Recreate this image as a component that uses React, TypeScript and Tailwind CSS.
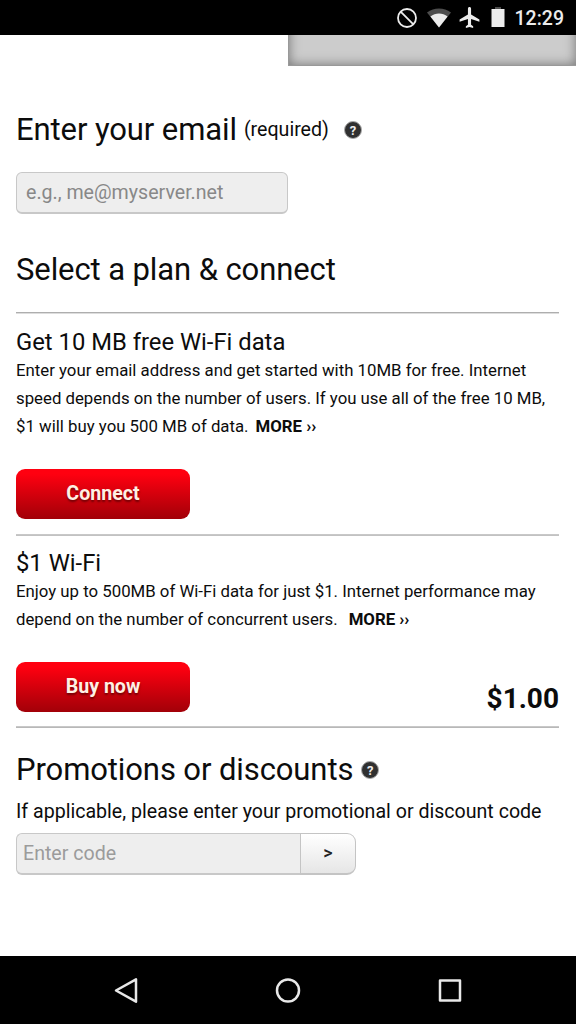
import React from "react";

const plane =
  "M21 16v-2l-8-5V3.5c0-.83-.67-1.5-1.5-1.5S10 2.67 10 3.5V9l-8 5v2l8-2.500V19l-2 1.500V22l3.500-1 3.500 1v-1.500L13 19v-5.500l8 2.500z";

function StatusBar() {
  return (
    <header className="flex h-[35px] shrink-0 items-center justify-end bg-black pr-[12px] text-[#ececec]">
      <svg className="mt-px mr-[9px] h-[22px] w-[22px]" viewBox="0 0 22 22" fill="none" stroke="currentColor" strokeWidth="1.8">
        <circle cx="11" cy="11" r="9" />
        <path d="M4.600 4.600l12.800 12.800" />
      </svg>
      <svg className="mt-px mr-[6px] h-[20px] w-[24px]" viewBox="0 0 24 20">
        <path d="M0 4.500C7 -1 17 -1 24 4.500L12 19.500z" fill="#4d4d4d" />
        <path d="M3.400 8.500C8.500 4.500 15.500 4.500 20.600 8.500L12 19.500z" fill="currentColor" />
      </svg>
      <svg className="mr-[9px] h-[25px] w-[25px]" viewBox="0 0 24 24" fill="currentColor">
        <path d={plane} transform="translate(0.500 0)" />
      </svg>
      <svg className="mr-[10px] h-[21px] w-[14px]" viewBox="0 0 14 21">
        <path d="M4 0h6v3H4z" fill="#4d4d4d" />
        <path d="M0.500 2h13v18h-13z" fill="currentColor" />
      </svg>
      <span className="mt-[2px] text-[19.5px] leading-[35px] font-medium">12:29</span>
    </header>
  );
}

function Help({ className }: { className: string }) {
  return (
    <span className={`flex h-[18px] w-[18px] items-center justify-center rounded-full border border-[#aaa] bg-[#303030] text-[13px] leading-none font-bold text-[#eee] ${className}`}>
      ?
    </span>
  );
}

function RedButton({ label }: { label: string }) {
  return (
    <button className="h-[50px] w-[174px] rounded-[9px] bg-linear-to-b from-[#ff0010] from-10% to-[#a20008] pb-px text-[19.6px] font-bold text-[#fff0e4] [text-shadow:0_2px_2px_rgba(60,0,0,0.6)]">
      {label}
    </button>
  );
}

function More({ className }: { className: string }) {
  return <b className={`font-bold ${className}`}>MORE ››</b>;
}

export default function App() {
  return (
    <div className="flex h-[1024px] w-[576px] flex-col overflow-hidden bg-white font-['Roboto',sans-serif] text-[#0c0c0c]">
      <StatusBar />
      <div className="flex h-[31px] shrink-0 justify-end">
        <div className="relative h-[31px] w-[288px] overflow-hidden border-b border-l border-[#999] bg-[#cccccc]">
          <div className="absolute inset-x-0 -top-[20px] bottom-0 shadow-[inset_0_0_12px_0_#757575]" />
        </div>
      </div>
      <main className="flex grow flex-col pt-[44px] pr-[17px] pl-4">
        <div className="flex h-[40px] items-center">
          <h1 className="text-[31px] leading-[40px] tracking-[-0.1px] whitespace-nowrap">Enter your email</h1>
          <span className="-mt-px ml-[7px] text-[19.6px] leading-[40px]">(required)</span>
          <Help className="ml-[15px]" />
        </div>
        <input
          className="mt-[22px] h-[42px] w-[272px] rounded-[6px] border-[1.5px] border-b-2 border-[#c8c8c8] bg-[#eeeeee] pl-[9px] text-[19.6px] placeholder:text-[#888]"
          placeholder="e.g., me@myserver.net"
        />
        <h2 className="mt-[36px] h-[40px] text-[31px] leading-[40px] tracking-[-0.1px] whitespace-nowrap">Select a plan &amp; connect</h2>
        <section className="mt-[22px] pt-[14px] shadow-[inset_0_1px_0_#aeaeae,inset_0_2px_0_#dddddd]">
          <h3 className="-mb-px pt-[2px] text-[23.8px] leading-[29px]">Get 10 MB free Wi-Fi data</h3>
          <p className="text-[16.8px] leading-[28px] whitespace-nowrap">
            Enter your email address and get started with 10MB for free. Internet
            <br />
            speed depends on the number of users. If you use all of the free 10 MB,
            <br />
            $1 will buy you 500 MB of data.
            <More className="ml-[7px]" />
          </p>
          <div className="mt-[29px]">
            <RedButton label="Connect" />
          </div>
        </section>
        <section className="mt-[15px] h-[192px] pt-[13px] shadow-[inset_0_1px_0_#c8c8c8,inset_0_2px_0_#c2c2c2]">
          <h3 className="-mb-px pt-[2px] text-[23.8px] leading-[29px]">$1 Wi-Fi</h3>
          <p className="text-[16.8px] leading-[28px] whitespace-nowrap">
            Enjoy up to 500MB of Wi-Fi data for just $1. Internet performance may
            <br />
            depend on the number of concurrent users.
            <More className="ml-[11px]" />
          </p>
          <div className="mt-[29px] flex items-end justify-between">
            <RedButton label="Buy now" />
            <strong className="text-[28px] leading-[26px] font-bold">$1.00</strong>
          </div>
        </section>
        <section className="pt-[24px] shadow-[inset_0_1px_0_#c8c8c8,inset_0_2px_0_#b8b8b8]">
          <div className="flex h-[40px] items-center">
            <h2 className="text-[31px] leading-[40px] tracking-[-0.1px] whitespace-nowrap">Promotions or discounts</h2>
            <Help className="ml-[8px]" />
          </div>
          <p className="mt-[8px] text-[19.6px] leading-[28px] whitespace-nowrap">
            If applicable, please enter your promotional or discount code
          </p>
          <div className="mt-[7px] flex h-[42px]">
            <input
              className="h-[42px] w-[284px] rounded-l-[6px] border-[1.5px] border-r-0 border-b-2 border-[#c8c8c8] bg-[#eeeeee] pl-[6px] text-[19.6px] placeholder:text-[#9b9b9b]"
              placeholder="Enter code"
            />
            <button className="w-[56px] rounded-r-[9px] border-[1.5px] border-b-2 border-[#c4c4c4] bg-linear-to-b from-white to-[#e6e6e6] pb-[2px] text-[18px] font-medium text-[#222]">
              &gt;
            </button>
          </div>
        </section>
      </main>
      <nav className="h-[68px] w-full shrink-0 bg-black">
        <svg className="h-[68px] w-[576px]" viewBox="0 0 576 68" fill="none" stroke="#e8e8e8" strokeWidth="2.500" strokeLinejoin="round">
          <path d="M116 34.500L136 23.300V45.700z" />
          <circle cx="288" cy="34.500" r="11" />
          <path d="M440 24.500h20v20h-20z" />
        </svg>
      </nav>
    </div>
  );
}
